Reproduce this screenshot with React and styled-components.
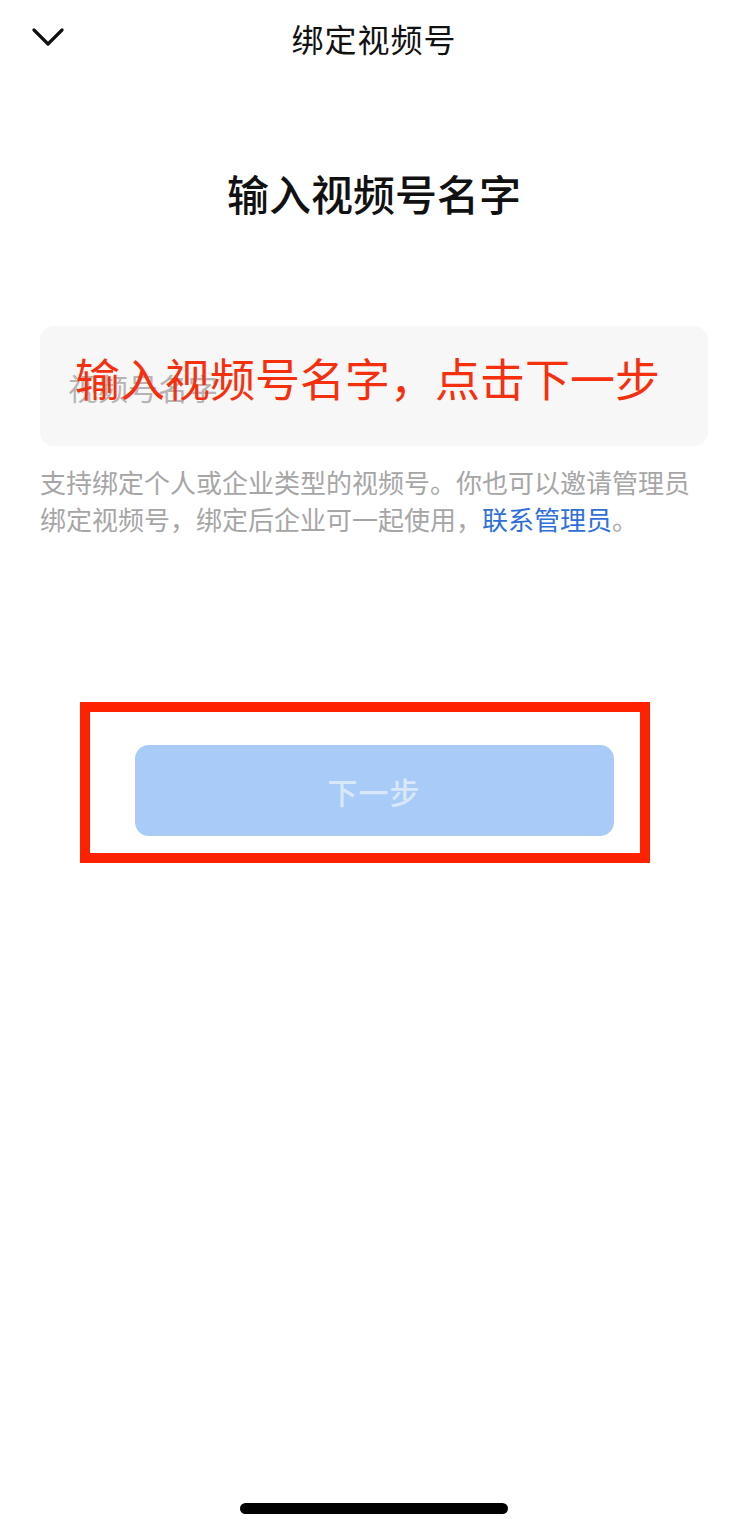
import React from 'react'
import styled, { createGlobalStyle } from 'styled-components'

const GlobalStyle = createGlobalStyle`
  html, body {
    margin: 0;
    padding: 0;
    background: #ffffff;
  }
  body {
    font-family: 'Noto Sans CJK SC', 'Noto Sans', sans-serif;
    color: #111111;
  }
  * {
    box-sizing: border-box;
  }
`

const Page = styled.div`
  width: 748px;
  min-height: 1530px;
  display: flex;
  flex-direction: column;
  background: #ffffff;
`

const Header = styled.header`
  height: 78px;
  display: grid;
  grid-template-columns: 1fr auto 1fr;
  align-items: center;
  padding: 0 22px;
`

const Back = styled.button`
  justify-self: start;
  width: 52px;
  height: 44px;
  padding: 0 0 0 10px;
  border: none;
  background: none;
  display: flex;
  align-items: center;
  justify-content: flex-start;
  margin-top: -4px;
  cursor: pointer;
`

const Title = styled.h1`
  margin: -2px 0 0;
  font-size: 32px;
  font-weight: 400;
  letter-spacing: 1px;
  color: #111111;
`

const Main = styled.main`
  display: flex;
  flex-direction: column;
  padding: 0 40px;
`

const Heading = styled.h2`
  margin: 90px 0 0;
  font-size: 42px;
  line-height: 50px;
  font-weight: 500;
  text-align: center;
  color: #111111;
`

const InputBox = styled.div`
  position: relative;
  margin-top: 108px;
  height: 120px;
  border-radius: 14px;
  background: #f7f7f7;
  display: flex;
  align-items: center;
  padding: 0 28px;
`

const Placeholder = styled.span`
  font-size: 30px;
  color: #b4b4b4;
  margin-top: 2px;
`

const Annotation = styled.span`
  position: absolute;
  left: 35px;
  top: 22px;
  font-size: 45px;
  line-height: 60px;
  color: #f5300f;
  white-space: nowrap;
`

const Help = styled.p`
  margin: 17px 0 0;
  font-size: 26px;
  line-height: 37px;
  color: #a6a6a6;
`

const Link = styled.a`
  color: #2f6fd8;
  text-decoration: none;
`

const ButtonWrap = styled.div`
  position: relative;
  align-self: center;
  margin-top: 208px;
`

const NextButton = styled.button`
  width: 479px;
  height: 91px;
  border: none;
  border-radius: 14px;
  background: #a8cbf7;
  color: #d9e7fa;
  font-family: 'Noto Sans CJK SC', sans-serif;
  font-size: 30px;
  font-weight: 500;
  letter-spacing: 1px;
`

const Frame = styled.div`
  position: absolute;
  top: -43px;
  left: -55px;
  width: 570px;
  height: 161px;
  border: 10px solid #ff2200;
  pointer-events: none;
`

const HomeBar = styled.div`
  margin: auto auto 16px;
  width: 268px;
  height: 11px;
  border-radius: 6px;
  background: #000000;
`

export default function App() {
  return (
    <Page>
      <GlobalStyle />
      <Header>
        <Back aria-label="返回">
          <svg width="32" height="20" viewBox="0 0 32 20" fill="none">
            <path
              d="M2 3 L16 17 L30 3"
              stroke="#111111"
              strokeWidth="3.2"
              strokeLinecap="round"
              strokeLinejoin="round"
            />
          </svg>
        </Back>
        <Title>绑定视频号</Title>
        <span />
      </Header>
      <Main>
        <Heading>输入视频号名字</Heading>
        <InputBox>
          <Placeholder>视频号名字</Placeholder>
          <Annotation>输入视频号名字，点击下一步</Annotation>
        </InputBox>
        <Help>
          支持绑定个人或企业类型的视频号。你也可以邀请管理员绑定视频号，绑定后企业可一起使用，
          <Link>联系管理员</Link>。
        </Help>
        <ButtonWrap>
          <NextButton>下一步</NextButton>
          <Frame />
        </ButtonWrap>
      </Main>
      <HomeBar />
    </Page>
  )
}
